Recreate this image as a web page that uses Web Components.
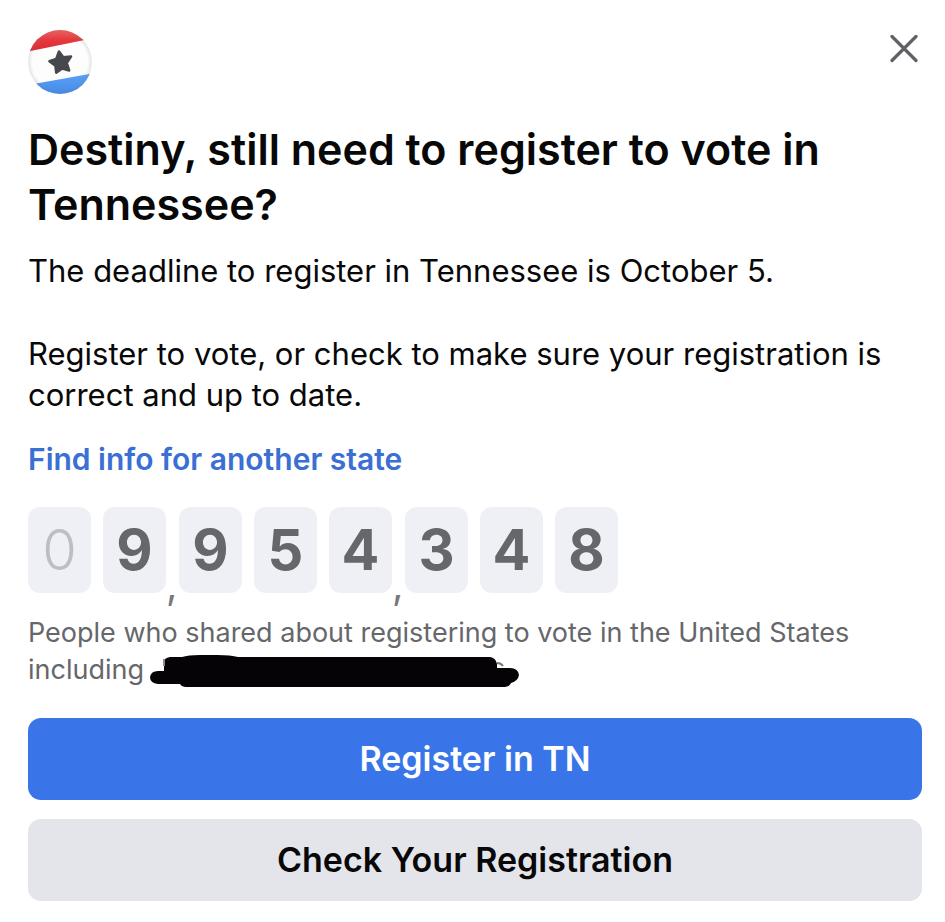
<!DOCTYPE html>
<html lang="en">
<head>
<meta charset="utf-8">
<meta name="viewport" content="width=device-width, initial-scale=1">
<title>Register to vote</title>
<style>
  body { margin: 0; background: #fff; color: #080809; font-family: Inter, "Liberation Sans", sans-serif; }
</style>
</head>
<body>
<voter-card>
  <vote-badge slot="icon"></vote-badge>
  <close-button slot="close"></close-button>
  <span slot="title">Destiny, still need to register to vote in Tennessee?</span>
  <p slot="body">The deadline to register in Tennessee is October 5.</p>
  <p slot="body">Register to vote, or check to make sure your registration is correct and up to date.</p>
  <text-link slot="link" href="#states">Find info for another state</text-link>
  <digit-counter slot="counter" value="09,954,348"></digit-counter>
  <span slot="caption">People who shared about registering to vote in the United States including <hidden-name></hidden-name></span>
  <action-button slot="actions" kind="primary">Register in TN</action-button>
  <action-button slot="actions">Check Your Registration</action-button>
</voter-card>

<script>
class BaseElement extends HTMLElement {
  connectedCallback() {
    if (this.shadowRoot) return;
    this.attachShadow({ mode: 'open' }).innerHTML = this.render();
  }
}

customElements.define('voter-card', class extends BaseElement {
  render() {
    return `<style>
      :host { display: block; padding: 30px 23px 21px 28px; }
      header { display: flex; justify-content: space-between; align-items: flex-start; }
      h1 { margin: 28px 0 0; font-size: 43px; line-height: 55px; font-weight: 600; }
      .body { display: grid; gap: 42px; margin-top: 18px; font-size: 31px; line-height: 41px; }
      ::slotted(p) { margin: 0; }
      .link { margin-top: 24px; }
      .counter { margin-top: 27px; }
      .caption { margin: 21px 0 0; font-size: 27px; line-height: 37px; color: #65676b; }
      .actions { display: grid; gap: 19px; margin-top: 29px; }
    </style>
    <header><slot name="icon"></slot><slot name="close"></slot></header>
    <h1><slot name="title"></slot></h1>
    <div class="body"><slot name="body"></slot></div>
    <div class="link"><slot name="link"></slot></div>
    <div class="counter"><slot name="counter"></slot></div>
    <p class="caption"><slot name="caption"></slot></p>
    <div class="actions"><slot name="actions"></slot></div>`;
  }
});

customElements.define('vote-badge', class extends BaseElement {
  render() {
    return `<style>:host { display: block; } svg { display: block; }</style>
    <svg width="64" height="64" viewBox="0 0 64 64" aria-hidden="true">
      <defs>
        <clipPath id="c"><circle cx="32" cy="32" r="32"/></clipPath>
        <linearGradient id="r" x1="0" y1="0" x2="0" y2="1"><stop offset="0" stop-color="#f0605f"/><stop offset=".45" stop-color="#e5393f"/><stop offset="1" stop-color="#dd2831"/></linearGradient>
        <linearGradient id="b" x1="0" y1="0" x2="0" y2="1"><stop offset="0" stop-color="#5ca0f6"/><stop offset="1" stop-color="#438bea"/></linearGradient>
        <radialGradient id="s"><stop offset=".86" stop-color="#888" stop-opacity="0"/><stop offset="1" stop-color="#777" stop-opacity=".2"/></radialGradient>
      </defs>
      <g clip-path="url(#c)">
        <path d="M0 0h64v64H0z" fill="#fdfdfe"/>
        <path d="M0 0H64V8.500L0 21.500z" fill="url(#r)"/>
        <path d="M0 55L64 43.500V64H0z" fill="url(#b)"/>
        <circle cx="32" cy="32" r="32" fill="url(#s)"/>
      </g>
      <path d="M31 21.500L35.300 27.200L43 26.500L38.700 33L41.200 40.500L34.200 38.500L28.200 42.600L27.400 35.800L21.400 31.300L28.200 29Z" fill="#45484c" stroke="#45484c" stroke-width="2.500" stroke-linejoin="round"/>
    </svg>`;
  }
});

customElements.define('close-button', class extends BaseElement {
  render() {
    return `<style>
      :host { display: block; }
      button { display: block; margin: 0; padding: 4px; border: 0; background: none; cursor: pointer; }
      svg { display: block; }
    </style>
    <button type="button" aria-label="Close"><svg width="30" height="30" viewBox="0 0 30 30"><path d="M4 2.500L28 26.500M28 2.500L4 26.500" stroke="#606266" stroke-width="3.200" stroke-linecap="round"/></svg></button>`;
  }
});

customElements.define('text-link', class extends BaseElement {
  render() {
    return `<style>
      :host { display: block; font-size: 30px; line-height: 41px; font-weight: 600; }
      a { color: #3a6fd4; text-decoration: none; }
    </style>
    <a href="${this.getAttribute('href')}"><slot></slot></a>`;
  }
});

customElements.define('digit-counter', class extends BaseElement {
  render() {
    const groups = this.getAttribute('value').split(',');
    const html = groups.map((group, g) => {
      const tiles = [...group].map((d, i) => `<span class="tile${g === 0 && i === 0 && d === '0' ? ' zero' : ''}">${d}</span>`).join('');
      return `<span class="group">${tiles}${g < groups.length - 1 ? '<span class="comma">,</span>' : ''}</span>`;
    }).join('');
    return `<style>
      :host { display: flex; gap: 13px; }
      .group { display: flex; gap: 12px; position: relative; }
      .tile { box-sizing: border-box; width: 63px; padding: 15px 0; border-radius: 12px; background: #eff0f5; color: #65676b; font-size: 56px; line-height: 56px; font-weight: 700; text-align: center; }
      .zero { color: #bcbec3; font-weight: 300; }
      .comma { position: absolute; left: 100%; top: 100%; margin-top: -28px; color: #77797c; font-size: 40px; line-height: 40px; font-weight: 400; }
    </style>${html}`;
  }
});

/* Scribble drawn over a withheld name. */
customElements.define('hidden-name', class extends BaseElement {
  render() {
    return `<style>:host { display: inline-block; vertical-align: middle; margin-left: -2px; } svg { display: block; }</style>
    <svg width="370" height="34" viewBox="0 0 370 34" role="img" aria-label="Name hidden">
      <path d="M14 7Q14 3 20 2H32Q38 0 50 0H67Q81 0 88 2H340Q346 3 347 9V13H360Q368 13 369 20Q368 26 361 28Q359 32 355 32H36Q32 32 30 29H8Q0 28 0 22Q1 16 8 16H14Z" fill="#050305"/>
      <path d="M14 4V11" stroke="#8b8d90" stroke-width="2"/>
      <path d="M347 8Q351 8 353 11" fill="none" stroke="#77797c" stroke-width="2"/>
    </svg>`;
  }
});

customElements.define('action-button', class extends BaseElement {
  render() {
    return `<style>
      :host { display: block; }
      button { display: block; width: 100%; margin: 0; padding: 20px; border: 0; border-radius: 13px; background: #e4e5ea; color: #080809; font: 600 34px/42px Inter, "Liberation Sans", sans-serif; cursor: pointer; }
      :host([kind="primary"]) button { background: #3975e9; color: #fff; }
    </style>
    <button type="button"><slot></slot></button>`;
  }
});
</script>
</body>
</html>
